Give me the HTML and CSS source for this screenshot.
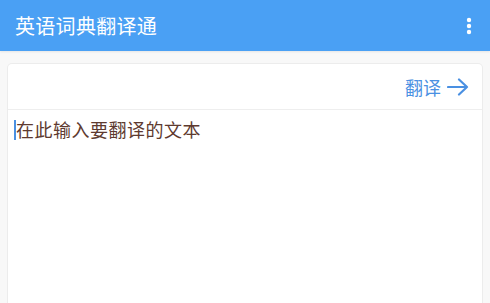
FILE: index.html
```html
<!DOCTYPE html>
<html lang="zh-CN">
<head>
  <meta charset="UTF-8" />
  <meta name="viewport" content="width=device-width, initial-scale=1" />
  <title>英语词典翻译通</title>
  <link rel="stylesheet" href="styles.css">
</head>
<body>

<header class="appbar">
  <h1 class="title">英语词典翻译通</h1>
  <button class="menu" aria-label="更多">
    <svg width="6" height="18" viewBox="0 0 6 18">
      <circle cx="3" cy="3" r="2.2" fill="#fff" />
      <circle cx="3" cy="9" r="2.2" fill="#fff" />
      <circle cx="3" cy="15" r="2.2" fill="#fff" />
    </svg>
  </button>
</header>

<main class="card">
  <div class="card-bar">
    <button class="translate">
      翻译
      <svg width="22" height="18" viewBox="0 0 22 18">
        <path d="M1 9 H20 M12 1.5 L20 9 L12 16.5" fill="none" stroke="#4a90e2" stroke-width="2.2" stroke-linecap="round" stroke-linejoin="round" />
      </svg>
    </button>
  </div>
  <div class="input">
    <span class="caret"></span><span class="placeholder">在此输入要翻译的文本</span>
  </div>
</main>

</body>
</html>
```

FILE: styles.css
```css
html, body {
  height: 303px;
  overflow: hidden;
}
body {
  margin: 0;
  background: #f8f8f8;
  font-family: "Noto Sans CJK SC", "Noto Sans", sans-serif;
}
.appbar {
  height: 51px;
  background: #4aa0f4;
  display: flex;
  align-items: center;
  justify-content: space-between;
  padding: 0 18px 0 15px;
  box-shadow: 0 1px 2px rgba(0,0,0,0.08);
}
.title {
  margin: 0;
  color: #fff;
  font-size: 20px;
  font-weight: normal;
  letter-spacing: 0.3px;
  line-height: 1;
}
.menu {
  border: none;
  background: none;
  padding: 0;
  display: flex;
}
.card {
  margin: 13px 8px 0 8px;
  background: #fff;
  border-radius: 4px;
  box-shadow: 0 0 0 1px #ececec, 0 1px 2px rgba(0,0,0,0.06);
  height: 242px;
}
.card-bar {
  height: 45px;
  border-bottom: 1px solid #eeeeee;
  display: flex;
  justify-content: flex-end;
  align-items: center;
  padding-right: 13px;
}
.translate {
  border: none;
  background: none;
  padding: 0;
  color: #4a90e2;
  font-family: inherit;
  font-size: 18px;
  display: flex;
  align-items: center;
  gap: 6px;
}
.input {
  padding: 8px 6px;
  display: flex;
  align-items: center;
}
.caret {
  width: 2px;
  height: 20px;
  background: #4a90e2;
}
.placeholder {
  color: #5e3a2f;
  font-size: 18px;
  letter-spacing: 0.5px;
  line-height: 1.3;
}
```
